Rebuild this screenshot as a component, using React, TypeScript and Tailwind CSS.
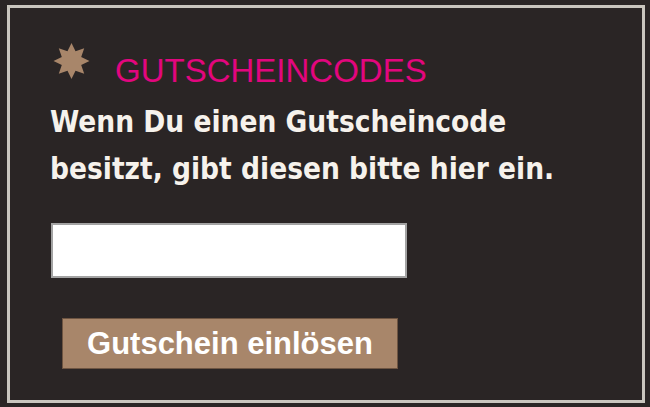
import React from 'react'

// eight-pointed star used as the heading bullet
function Star() {
  const pts = Array.from({ length: 16 }, (_, i) => {
    const a = (Math.PI / 8) * i - Math.PI / 2
    const r = i % 2 === 0 ? 18 : 10.5
    return `${(18.5 + r * Math.cos(a)).toFixed(2)},${(18 + r * Math.sin(a)).toFixed(2)}`
  }).join(' ')
  return (
    <svg width="37" height="36" viewBox="0 0 37 36" className="shrink-0">
      <polygon points={pts} fill="#a8866a" />
    </svg>
  )
}

export default function App() {
  return (
    <div className="h-[407px] w-[650px] overflow-hidden bg-[#2a2525] pl-[7px] pt-[5px]">
      <div className="h-[398px] w-[638px] border-[3px] border-[#c9c5be] pl-[40px] pt-[35px]">
        <div className="flex items-start">
          <div className="ml-[3px]">
            <Star />
          </div>
          <h2 className="ml-[25px] mt-[11px] font-['Liberation_Sans',Arial,sans-serif] text-[33px] leading-none text-[#e2067e]">
            GUTSCHEINCODES
          </h2>
        </div>

        <p className="mt-[12px] font-['DejaVu_Sans',sans-serif] text-[29.5px] font-bold leading-[47px] text-[#f6f2ec] [font-stretch:condensed]">
          Wenn Du einen Gutscheincode
          <br />
          besitzt, gibt diesen bitte hier ein.
        </p>

        <form className="mt-[30px]" onSubmit={e => e.preventDefault()}>
          <input
            name="gutschein"
            className="ml-[1px] block h-[55px] w-[356px] border-2 border-[#a3a3a3] bg-white px-2 text-lg outline-none"
          />
          <button
            type="submit"
            className="ml-[12px] mt-[40px] h-[51px] w-[336px] border border-[#6e5542] bg-[#a8866a] font-['Liberation_Sans',Arial,sans-serif] text-[31px] font-bold leading-none text-white"
          >
            Gutschein einlösen
          </button>
        </form>
      </div>
    </div>
  )
}
